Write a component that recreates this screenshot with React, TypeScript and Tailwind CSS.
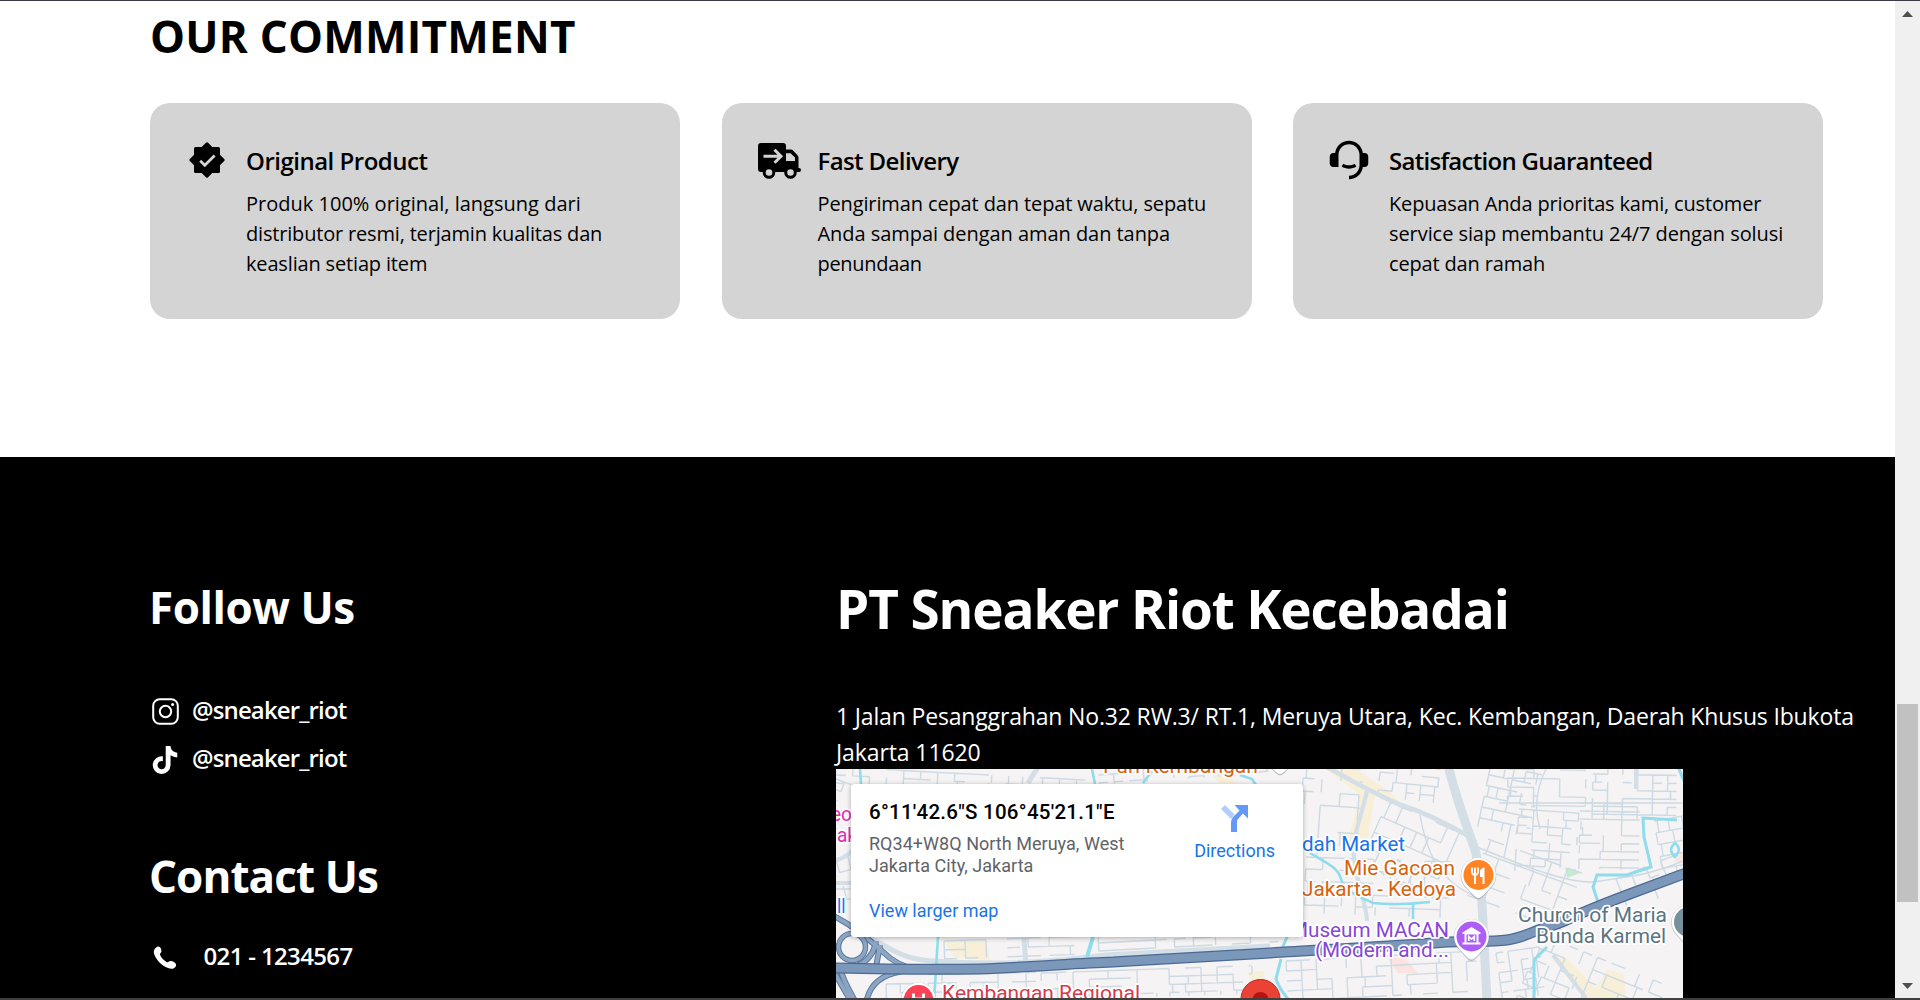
import type { ReactNode } from 'react'
import { FaTiktok } from 'react-icons/fa6'

type Line = { text: string; spacing: string }

function VerifiedIcon() {
  return (
    <svg width="36" height="36" viewBox="0 0 36 36">
      <rect x="5" y="5" width="26" height="26" rx="1.5" />
      <rect x="5.1" y="5.1" width="25.8" height="25.8" rx="1.5" transform="rotate(45 18 18)" />
      <path d="M11.2 18.700l4.600 4.600 9.800-9.800" fill="none" stroke="#d4d4d4" strokeWidth="2.7" />
    </svg>
  )
}

function TruckIcon() {
  return (
    <svg width="43" height="36" viewBox="0 0 43 36">
      <path
        fillRule="evenodd"
        d="M3 0H25a3 3 0 0 1 3 3V6.5H32.5a4 4 0 0 1 2.8 1.2L39.3 12a4 4 0 0 1 1.2 2.8V25H41a1.5 1.5 0 0 1 0 4H3a3 3 0 0 1-3-3V3A3 3 0 0 1 3 0ZM28 10.3V18H37V14.6L32.5 10.3Z"
      />
      <path d="M5.5 13.3H21M16.5 6.8L23 13.3L16.5 19.8" fill="none" stroke="#d4d4d4" strokeWidth="3" />
      <circle cx="11" cy="29.5" r="4.8" fill="#d4d4d4" stroke="#000" strokeWidth="3" />
      <circle cx="32.5" cy="29.5" r="4.8" fill="#d4d4d4" stroke="#000" strokeWidth="3" />
    </svg>
  )
}

function HeadsetIcon() {
  return (
    <svg width="42" height="42" viewBox="0 0 24 24">
      <path d="M21 8C22.1046 8 23 8.89543 23 10V14C23 15.1046 22.1046 16 21 16H19.9381C19.446 19.9463 16.0796 23 12 23V21C15.3137 21 18 18.3137 18 15V9C18 5.68629 15.3137 3 12 3C8.68629 3 6 5.68629 6 9V16H3C1.89543 16 1 15.1046 1 14V10C1 8.89543 1.89543 8 3 8H4.06189C4.55399 4.05369 7.92038 1 12 1C16.0796 1 19.446 4.05369 19.9381 8H21ZM7.75944 15.7849L8.81958 14.0887C9.74161 14.6662 10.8318 15 12 15C13.1682 15 14.2584 14.6662 15.1804 14.0887L16.2406 15.7849C15.0112 16.5549 13.5576 17 12 17C10.4424 17 8.98882 16.5549 7.75944 15.7849Z" />
    </svg>
  )
}

function InstagramIcon() {
  return (
    <svg width="27" height="27" viewBox="0 0 27 27" fill="none" stroke="#fff" strokeWidth="2">
      <rect x="1.2" y="1.2" width="24.6" height="24.6" rx="6.5" />
      <circle cx="13.5" cy="13.5" r="5.7" />
      <circle cx="20.6" cy="6.5" r="1.5" fill="#fff" stroke="none" />
    </svg>
  )
}

function PhoneIcon() {
  return (
    <svg width="24" height="24" viewBox="0 0 24 24" fill="#fff">
      <path d="M4.3.8C5.6.2 7.2 1 7.9 2.6c.7 1.600.8 3.300-.2 4.300-.8.8-1 1.400-.5 2.400 1.300 2.600 3.600 5 6.200 6.700.9.6 1.500.4 2.200-.2 1.500-1.200 3.500-.9 5.300.2 2 1.200 2.700 2.900 1.800 4.400-1.500 2.600-4.500 3-7.600 1.700C8.500 19.400 3.600 14.300 1.400 8.700.2 5.600.9 2.400 4.300.8Z" />
    </svg>
  )
}

const cards: { icon: ReactNode; iconBox: string; title: Line; body: Line[] }[] = [
  {
    icon: <VerifiedIcon />,
    iconBox: 'pl-[39px] pt-[39px]',
    title: { text: 'Original Product', spacing: 'tracking-[-0.5px]' },
    body: [
      { text: 'Produk 100% original, langsung dari', spacing: 'tracking-[0.01px]' },
      { text: 'distributor resmi, terjamin kualitas dan', spacing: 'tracking-[-0.18px]' },
      { text: 'keaslian setiap item', spacing: 'tracking-[-0.16px]' },
    ],
  },
  {
    icon: <TruckIcon />,
    iconBox: 'pl-[36px] pt-[40px]',
    title: { text: 'Fast Delivery', spacing: 'tracking-[-0.6px]' },
    body: [
      { text: 'Pengiriman cepat dan tepat waktu, sepatu', spacing: 'tracking-[-0.12px]' },
      { text: 'Anda sampai dengan aman dan tanpa', spacing: 'tracking-[-0.05px]' },
      { text: 'penundaan', spacing: 'tracking-[-0.3px]' },
    ],
  },
  {
    icon: <HeadsetIcon />,
    iconBox: 'pl-[35px] pt-[36px]',
    title: { text: 'Satisfaction Guaranteed', spacing: 'tracking-[-0.72px]' },
    body: [
      { text: 'Kepuasan Anda prioritas kami, customer', spacing: 'tracking-[-0.16px]' },
      { text: 'service siap membantu 24/7 dengan solusi', spacing: 'tracking-[-0.07px]' },
      { text: 'cepat dan ramah', spacing: 'tracking-[-0.16px]' },
    ],
  },
]

/* Small repeatable generator so that the side streets are the same on every render. */
function makeRandom(seed: number) {
  let s = seed
  return () => {
    s = (s * 16807) % 2147483647
    return s / 2147483647
  }
}

/* [x, y, width, height, angle, column step, row step] of each block of side streets */
const blocks: number[][] = [
  [0, -2, 250, 18, 3, 17, 8],
  [262, -2, 170, 18, -4, 15, 8],
  [468, -4, 60, 90, 4, 19, 13],
  [545, -6, 60, 34, 6, 14, 9],
  [552, 32, 78, 70, 24, 13, 17],
  [470, 88, 145, 56, 2, 17, 12],
  [655, -5, 52, 64, 12, 12, 11],
  [672, 0, 78, 36, 1, 26, 9],
  [757, -3, 84, 52, 1, 15, 8],
  [683, 40, 60, 62, 4, 15, 8],
  [744, 34, 60, 66, 1, 21, 8],
  [652, 70, 100, 60, 20, 17, 15],
  [780, 110, 66, 34, -22, 16, 12],
  [818, 52, 30, 60, -10, 14, 12],
  [108, 172, 130, 18, -2, 21, 9],
  [262, 166, 180, 16, -3, 19, 8],
  [50, 206, 150, 26, -1, 14, 9],
  [205, 204, 210, 28, -2, 16, 8],
  [450, 192, 190, 40, -3, 15, 10],
  [660, 184, 44, 48, -8, 12, 10],
  [706, 166, 140, 70, 22, 15, 13],
  [0, 90, 14, 50, -15, 12, 14],
  [0, 10, 16, 30, 20, 9, 10],
]

function streetPath([, , w, h, , sx, sy]: number[], seed: number) {
  const rnd = makeRandom(seed)
  let d = ''
  for (let y = 0; y <= h; y += sy) {
    for (let x = 0; x < w; x += sx) {
      if (rnd() < 0.68) d += `M${x} ${y}L${Math.min(w, x + sx * (rnd() < 0.2 ? 0.6 : 1))} ${y}`
    }
  }
  for (let x = 0; x <= w; x += sx) {
    for (let y = 0; y < h; y += sy) {
      const jitter = rnd() < 0.2 ? 3 : 0
      if (rnd() < 0.66) d += `M${x + jitter} ${y}V${Math.min(h, y + sy)}`
    }
  }
  return d
}

function Pin({ x, y, color, children }: { x: number; y: number; color: string; children?: ReactNode }) {
  return (
    <g transform={`translate(${x} ${y})`}>
      <path
        d="M0 24.500C-4 24-7 19-11 14.500A17.800 17.800 0 1 1 11 14.500C7 19 4 24 0 24.500Z"
        fill="#8d959c"
        opacity=".55"
      />
      <path d="M0 23C-3.500 22.500-7 18-11 13.500A17.300 17.300 0 1 1 11 13.500C7 18 3.500 22.500 0 23Z" fill="#fff" />
      <circle r="15" fill={color} />
      {children}
    </g>
  )
}

const labels = [
  { t: 'Puri Kembangan', x: 267, y: 3.5, w: 155, c: '#d9620b' },
  { t: 'eo', x: -5, y: 52, w: 21, c: '#e32bb5' },
  { t: 'ak', x: 1, y: 73, w: 20, c: '#e32bb5' },
  { t: 'll', x: 1, y: 144, w: 8.5, c: '#1a73e8' },
  { t: 'dah Market', x: 466, y: 82, w: 103, c: '#1a73e8' },
  { t: 'Mie Gacoan', x: 508, y: 106, w: 111, c: '#d9620b' },
  { t: 'Jakarta - Kedoya', x: 466, y: 127, w: 154, c: '#d9620b' },
  { t: 'Museum MACAN', x: 454, y: 167.500, w: 159, c: '#8746d8' },
  { t: '(Modern and...', x: 479, y: 188, w: 134, c: '#8746d8' },
  { t: 'Church of Maria', x: 682, y: 153, w: 149, c: '#5b7480' },
  { t: 'Bunda Karmel', x: 700, y: 174, w: 130, c: '#5b7480' },
  { t: 'Kembangan Regional', x: 106, y: 230.500, w: 198, c: '#d63a4a' },
]

const highway =
  'M-4 199C40 200 80 201 144 200C200 198 240 194 277 193L434 184C500 180 560 177 611 173C640 172 656 173 671 171C685 169 695 164 707 159C725 155 732 150 741 146C760 138 775 132 791 126L850 104'
const ramps =
  'M-4 146C16 156 30 168 46 182C56 192 66 198 80 200M4 199C8 214 14 222 20 234M-2 203L16 234M30 234C34 214 46 206 66 202M40 172C38 184 32 192 22 196M44 176L40 198'

function MapCanvas() {
  return (
    <svg width="847" height="229" viewBox="0 0 847 229" className="block">
      <rect width="847" height="229" fill="#f5f3f3" />
      <g fill="#f8efd8">
        <path d="M489 0H520L553 22L563 32L548 32L539 26L531 72L512 72L524 27L509 14Z" />
        <path d="M106 169L150 172L154 191L118 188Z" />
        <path d="M717 191L729 188L760 219L772 200L788 206L790 229H750Z" />
        <path d="M370 0H392L398 14H384Z" />
        <path d="M412 204L428 202L428 214L416 216Z" />
      </g>
      <path d="M551 188L570 190L582 204L562 204Z M838 92L847 82V96Z" fill="#fbe3e0" />
      <path d="M729 98L744 104L731 109Z" fill="#c5ecd0" />

      <g fill="none" stroke="#cddae3" strokeWidth="1.400">
        {blocks.map((b, i) => (
          <path key={i} d={streetPath(b, 101 + i * 977)} transform={`translate(${b[0]} ${b[1]}) rotate(${b[4]})`} />
        ))}
        <path d="M663 34H847M704 60C698 40 700 20 710 0M675 56L668 88M641 78C690 98 740 118 764 112C790 108 815 106 847 92M584 46C590 80 600 110 640 128M0 120H20" />
      </g>

      <g fill="none" stroke="#d3dee6">
        <path d="M612 -4C620 30 632 60 640 84L646 134L651 232" strokeWidth="9" />
        <path d="M489 -3C520 14 540 26 565 36C590 44 610 54 634 68" strokeWidth="4.500" />
        <path d="M531 22C526 44 520 60 517 76C518 110 530 130 531 152" strokeWidth="4" />
        <path d="M188 170L190 196M192 14L202 -2" strokeWidth="5" />
        <path d="M0 114H20M0 92C10 88 16 84 20 76" strokeWidth="4" />
        <path d="M30 168C50 174 60 190 96 192C150 196 210 194 270 186L434 177" strokeWidth="5" />
        <path d="M717 186L750 229M800 -2V20" strokeWidth="4" />
      </g>

      <g fill="none" stroke="#8fdcec" strokeWidth="2.600">
        <path d="M24 0L25 15M256 0L259 15M102 168L98 232M307 14L316 2M404 6L416 10L420 16" />
        <path d="M257 168L251 188" strokeWidth="4" />
        <path d="M474 84C490 94 502 98 505 110C508 122 524 128 537 134C560 137 580 134 594 133M577 134V150" />
        <path d="M451 168L444 184M445 190L440 210C444 222 450 226 453 232" strokeWidth="3" />
        <path d="M841 51L807 49L808 68L815 98L791 106H761L757 118L762 133M711 178L698 191V232M842 -2L848 12" strokeWidth="3" />
        <path d="M839 74C832 80 836 85 839 88C843 84 845 79 839 74Z" />
      </g>

      <g fill="none">
        <path d={ramps} stroke="#5b789f" strokeWidth="6" />
        <path d={ramps} stroke="#8ba5c2" strokeWidth="4" />
        <circle cx="16" cy="178" r="13.500" fill="#f5f3f3" stroke="#5b789f" strokeWidth="5.500" />
        <circle cx="16" cy="178" r="13.500" stroke="#8ba5c2" strokeWidth="3.500" />
        <path d={highway} stroke="#4b6993" strokeWidth="11" />
        <path d={highway} stroke="#7b98ba" strokeWidth="8.500" />
      </g>

      <g
        fontFamily="Roboto, sans-serif"
        fontSize="20"
        stroke="#fff"
        strokeWidth="3.500"
        strokeLinejoin="round"
        className="[paint-order:stroke]"
      >
        {labels.map((l) => (
          <text key={l.t} x={l.x} y={l.y} fill={l.c} textLength={l.w} lengthAdjust="spacingAndGlyphs">
            {l.t}
          </text>
        ))}
      </g>

      <Pin x={444} y={-18} color="#78909c" />
      <Pin x={642.5} y={106} color="#ff8426">
        <path
          d="M-6.500-7.500V-3C-6.500 0-3.500 0-3.500 0S-.5 0-.5-3V-7.500M-3.500-7.500V9"
          fill="none"
          stroke="#fff"
          strokeWidth="1.900"
        />
        <path d="M6-7.500V9H4V2H1.500V-3C1.500-6 4-7.500 6-7.500Z" fill="#fff" />
      </Pin>
      <Pin x={635.500} y={167.500} color="#af5df8">
        <path
          fillRule="evenodd"
          d="M0-9.500L9-4V-2.500H7V6H9V8H-9V6H-7V-2.500H-9V-4ZM-5-2V6H5V-2Z"
          fill="#fff"
        />
        <path d="M-2.800 4.500V0L0 2.600L2.800 0V4.500" fill="none" stroke="#fff" strokeWidth="1.600" />
      </Pin>
      <Pin x={853} y={153} color="#78909c" />
      <Pin x={82.500} y={231} color="#fc4355">
        <path d="M-5-6.500V7M5-6.500V7M-5-1H5" stroke="#fff" strokeWidth="2.800" />
      </Pin>
      <circle cx="424.500" cy="230" r="19.500" fill="#ea4335" stroke="#c5221f" strokeWidth="1" />
      <circle cx="424.500" cy="231" r="8" fill="#b31412" />
    </svg>
  )
}

function MapInfo() {
  return (
    <div className="absolute left-[15px] top-[15px] flex h-[153px] w-[452px] justify-between rounded-[3px] bg-white pl-[18px] pr-[28px] font-[Roboto,sans-serif] shadow-[0_1px_5px_rgba(0,0,0,0.3)]">
      <div className="flex flex-col whitespace-nowrap pt-[15px]">
        <div className="text-[20.5px] font-medium leading-[26px] tracking-[0.26px] text-black">
          6°11'42.6"S 106°45'21.1"E
        </div>
        <div className="mt-[8px] text-[18px] leading-[22px] text-[#5f6368]">
          <div className="tracking-[0.03px]">RQ34+W8Q North Meruya, West</div>
          <div className="tracking-[0.03px]">Jakarta City, Jakarta</div>
        </div>
        <a className="mt-[23px] text-[18px] leading-[22px] text-[#1a73e8]">View larger map</a>
      </div>
      <div className="flex flex-col items-center pt-[21px]">
        <svg width="27" height="27" viewBox="0 0 27 27">
          <path d="M0 4L4 0L13.500 9.500L10 14Z" fill="#b3cdfd" />
          <path d="M10 27V18C10 15 11 13 13 11L18.500 5.500L13.500 0H27V13.500L22 8.500L17 14C16 15 16 16.500 16 18V27Z" fill="#6499f8" />
        </svg>
        <div className="mt-[8px] text-[18px] leading-[22px] text-[#1a73e8]">Directions</div>
      </div>
    </div>
  )
}

function Scrollbar() {
  return (
    <div className="flex w-[25px] shrink-0 flex-col items-center bg-[#f0f0f0] pt-[10px]">
      <svg width="11" height="6" viewBox="0 0 11 6">
        <path d="M0 6L5.500 0L11 6Z" fill="#505050" />
      </svg>
      <div className="mt-[687px] h-[198px] w-[21px] bg-[#c1c1c1]" />
      <svg className="mt-[81px]" width="11" height="6" viewBox="0 0 11 6">
        <path d="M0 0L5.500 6L11 0Z" fill="#505050" />
      </svg>
    </div>
  )
}

export default function App() {
  return (
    <div className="flex h-[1000px] w-[1920px] overflow-hidden border-b-2 border-t border-b-[#404040] border-t-[#3a3945] bg-white font-['Open_Sans',sans-serif] text-black">
      <div className="flex w-[1895px] flex-col overflow-hidden">
        <section className="h-[456px] shrink-0 pl-[150px] pt-[5px]">
          <h2 className="text-[44px] font-bold leading-[60px] tracking-[0.25px]">OUR COMMITMENT</h2>
          <div className="mt-[37px] flex gap-[41.5px]">
            {cards.map((card) => (
              <article key={card.title.text} className="flex h-[216px] w-[530px] shrink-0 rounded-[20px] bg-[#d4d4d4]">
                <div className={`w-[96px] shrink-0 ${card.iconBox}`}>{card.icon}</div>
                <div className="whitespace-nowrap pt-[40px]">
                  <h3 className={`text-[24px] font-semibold leading-[36px] ${card.title.spacing}`}>{card.title.text}</h3>
                  <div className="mt-[10px] text-[20px] leading-[30px]">
                    {card.body.map((line) => (
                      <p key={line.text} className={line.spacing}>
                        {line.text}
                      </p>
                    ))}
                  </div>
                </div>
              </article>
            ))}
          </div>
        </section>

        <footer className="flex h-[541px] shrink-0 overflow-hidden bg-black text-white">
          <div className="w-[836px] shrink-0 pl-[149px] pt-[120px]">
            <h2 className="text-[44px] font-bold leading-[60px] tracking-[-0.45px]">Follow Us</h2>
            <div className="mt-[49px] text-[24px] font-semibold leading-[48px] tracking-[-0.86px]">
              <div className="flex h-[48px] items-center">
                <div className="flex w-[43px] pl-[2.500px] pt-[3px]">
                  <InstagramIcon />
                </div>
                @sneaker_riot
              </div>
              <div className="flex h-[48px] items-center">
                <div className="flex w-[43px] pl-[2px] pt-[4px]">
                  <FaTiktok size={28} />
                </div>
                @sneaker_riot
              </div>
            </div>
            <h2 className="mt-[64px] text-[44px] font-bold leading-[60px] tracking-[-0.92px]">Contact Us</h2>
            <div className="mt-[26px] flex h-[48px] items-center text-[24px] font-semibold tracking-[-0.65px]">
              <div className="flex w-[54.5px] pl-[4px] pt-[4px]">
                <PhoneIcon />
              </div>
              021 - 1234567
            </div>
          </div>
          <div className="flex w-[1059px] flex-col whitespace-nowrap pt-[116px]">
            <h1 className="text-[53px] font-bold leading-[72px] tracking-[-1.1px]">PT Sneaker Riot Kecebadai</h1>
            <address className="mt-[53px] h-[71px] text-[23px] not-italic leading-[36px]">
              <div className="tracking-[-0.16px]">
                1 Jalan Pesanggrahan No.32 RW.3/ RT.1, Meruya Utara, Kec. Kembangan, Daerah Khusus Ibukota
              </div>
              <div className="tracking-[-0.1px]">Jakarta 11620</div>
            </address>
            <div className="relative h-[229px] w-[847px] overflow-hidden">
              <MapCanvas />
              <MapInfo />
            </div>
          </div>
        </footer>
      </div>
      <Scrollbar />
    </div>
  )
}
